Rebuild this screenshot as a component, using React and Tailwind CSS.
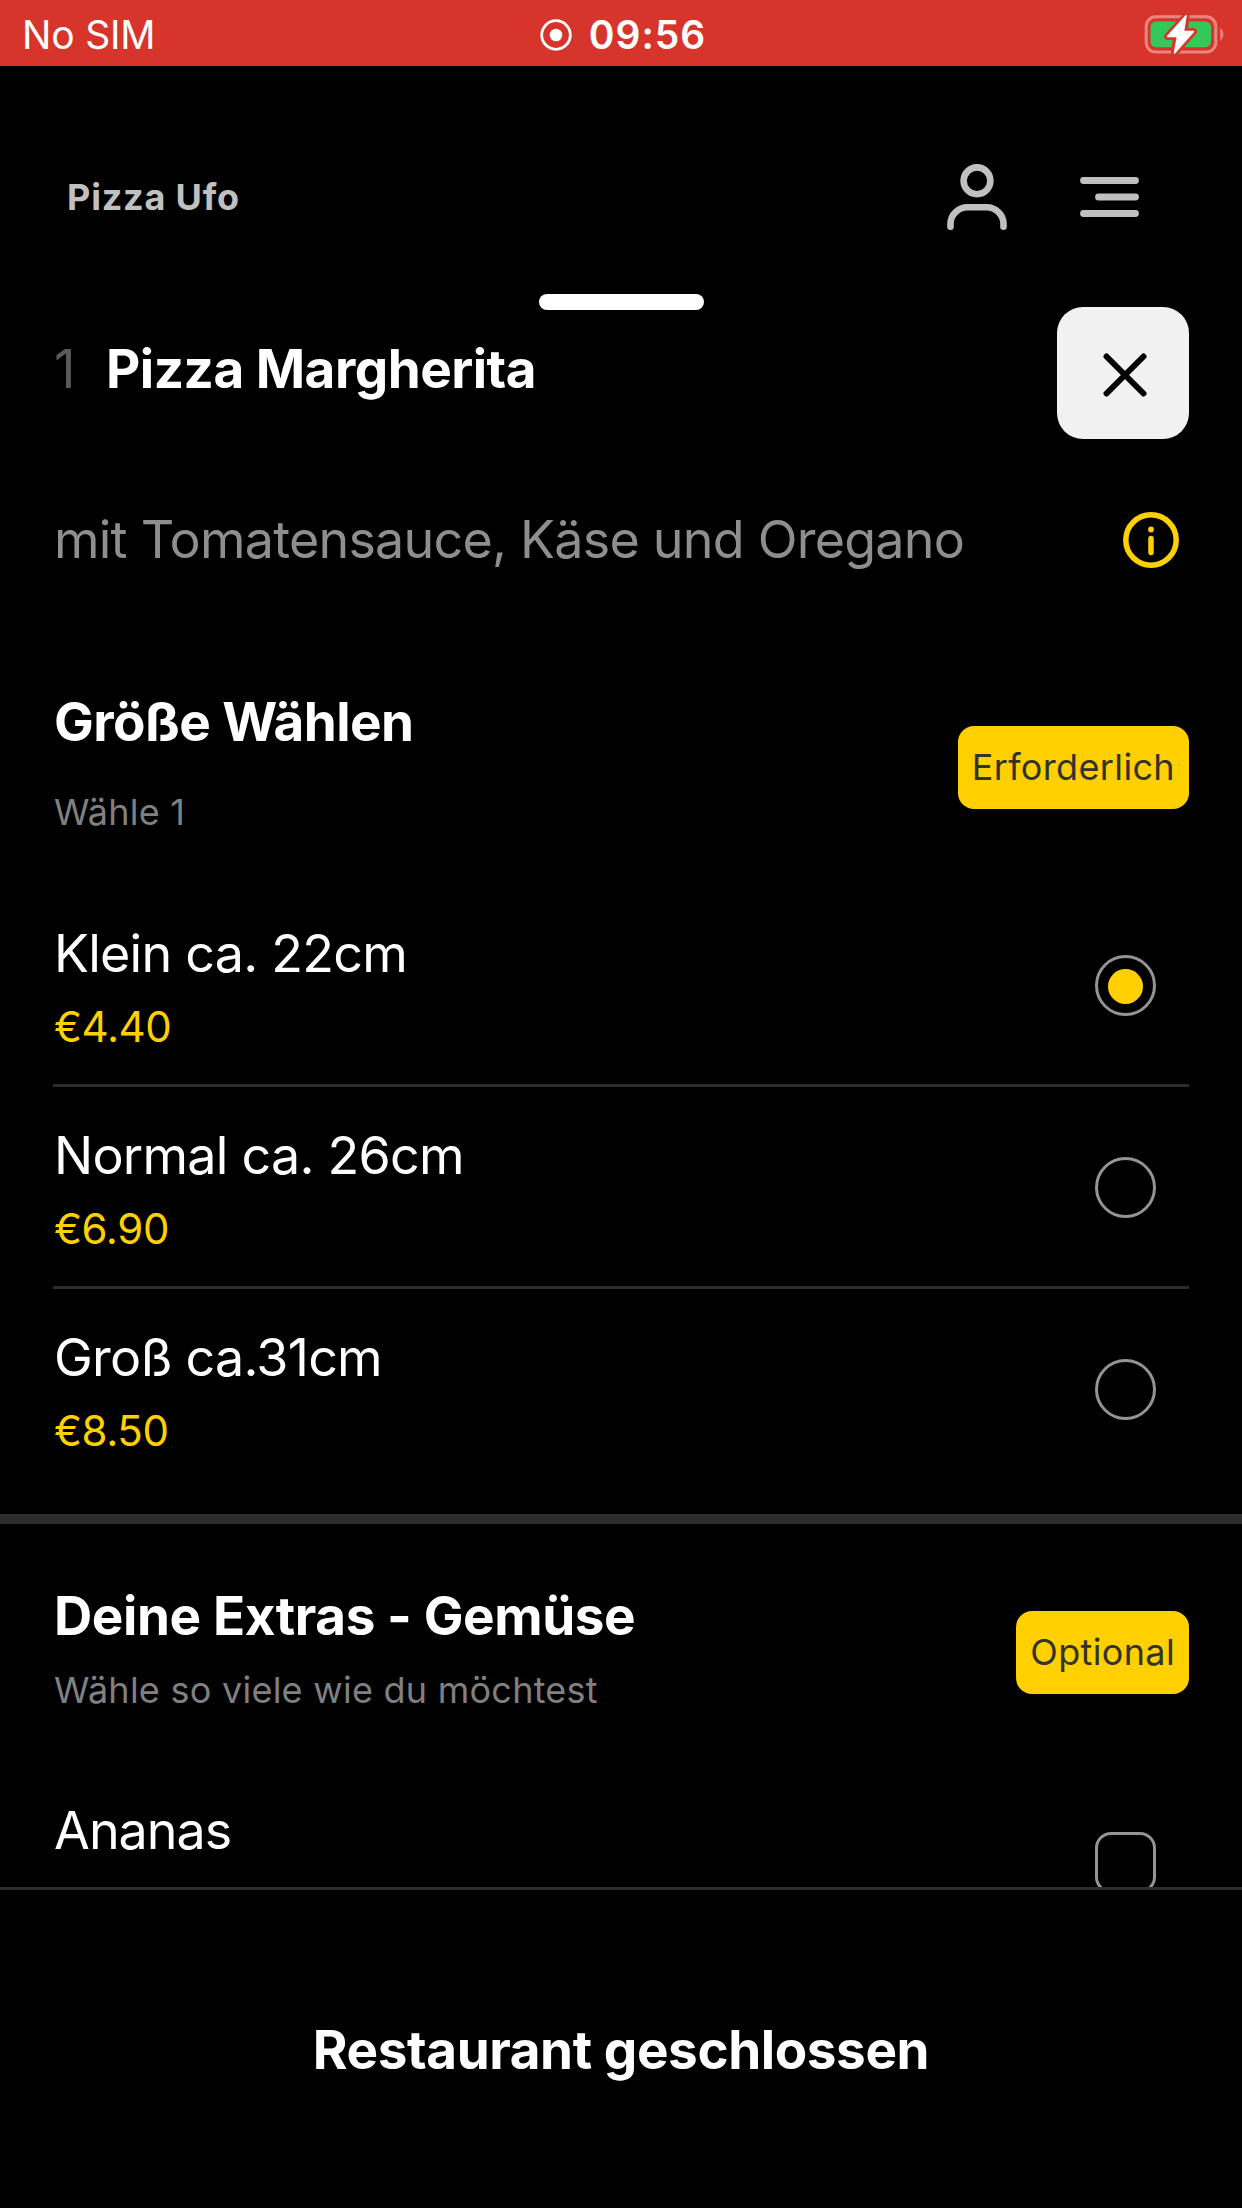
import { useState } from "react";

const sizes = [
  { id: "klein", name: "Klein ca. 22cm", price: "€4.40" },
  { id: "normal", name: "Normal ca. 26cm", price: "€6.90" },
  { id: "gross", name: "Groß ca.31cm", price: "€8.50" },
];

function StatusBar() {
  return (
    <div className="grid h-[66px] shrink-0 grid-cols-3 items-center bg-[#d7352c] text-[39px] leading-[68px] text-white">
      <span className="pl-[22px] tracking-[-0.2px]">No SIM</span>
      <div className="flex items-center justify-center gap-[17px] pl-[4px] pt-px">
        <svg width="32" height="32" viewBox="0 0 32 32" fill="none">
          <circle cx="16" cy="16" r="14.3" stroke="#fff" strokeWidth="2.8" />
          <circle cx="16" cy="16" r="6.3" fill="#fff" />
        </svg>
        <span className="font-semibold tracking-[1px]">09:56</span>
      </div>
      <svg className="ml-auto mr-[18px]" width="80" height="44" viewBox="0 0 80 44">
        <rect x="2.2" y="3.8" width="69.6" height="35.2" rx="9.5" fill="none" stroke="#e88680" strokeWidth="3" />
        <path d="M76.3 15.2c1.9 1.1 3 3.3 3 6.1s-1.100 5-3 6.100z" fill="#e88680" />
        <rect x="6.500" y="8.600" width="60.500" height="25.600" rx="5.500" fill="#34c759" />
        <path d="M42 3 23.500 23.500h9L30.500 40 49.500 18.500H40z" fill="#d7352c" stroke="#d7352c" strokeWidth="7" strokeLinejoin="round" />
        <path d="M42 2.800 23.500 23.500h10L30.500 40 49.500 18.500H39.500z" fill="#fff" stroke="#fff" strokeWidth="1.500" strokeLinejoin="round" />
      </svg>
    </div>
  );
}

function Header() {
  return (
    <header className="flex h-[228px] shrink-0 items-center pt-[34px] pl-[67px] pr-[103px]">
      <span className="text-[36px] font-bold leading-[50px] tracking-[0.8px] text-[#c0c0c0]">Pizza Ufo</span>
      <svg className="ml-auto" width="60" height="68" viewBox="0 0 60 68" fill="none" stroke="#c0c0c0" strokeWidth="6.6" strokeLinecap="round">
        <circle cx="30" cy="17.800" r="13.400" />
        <path d="M3.500 63.800v-3.300A17 16.500 0 0 1 20.500 44.300h19a17 16.500 0 0 1 17 16.200v3.300" />
      </svg>
      <svg className="ml-[73px]" width="59" height="42" viewBox="0 0 59 42" stroke="#c0c0c0" strokeWidth="6.8" strokeLinecap="round">
        <path d="M3.500 4.500h52M18.500 21h37M3.500 37.500h52" />
      </svg>
    </header>
  );
}

function Badge({ children }) {
  return (
    <span className="flex h-[83px] items-center rounded-[16px] bg-[#ffd000] px-[14px] text-[36px] tracking-[0.35px] text-[#33332b]">
      {children}
    </span>
  );
}

function Radio({ checked, onChange }) {
  return (
    <button
      role="radio"
      aria-checked={checked}
      onClick={onChange}
      className="mt-[2px] mr-[33px] flex size-[61px] shrink-0 items-center justify-center rounded-full border-[3px] border-[#949494]"
    >
      {checked && <span className="mt-[2px] size-[35px] rounded-full bg-[#ffd000]" />}
    </button>
  );
}

export default function App() {
  const [selected, setSelected] = useState("klein");
  const [pineapple, setPineapple] = useState(false);

  return (
    <div className="flex h-[2208px] w-[1242px] flex-col overflow-hidden bg-black font-['Inter',sans-serif] text-white">
      <StatusBar />
      <Header />

      <main className="flex h-[1593px] shrink-0 flex-col overflow-hidden">
        <div className="mx-auto h-[16px] w-[165px] shrink-0 rounded-[8px] bg-white" />

        <div className="-mt-[3px] flex h-[132px] shrink-0 items-center pl-[54px] pr-[53px]">
          <h1 className="flex pb-[8px] text-[53px] leading-[60px]">
            <span className="w-[52px] text-[#5a5a5a]">1</span>
            <span className="font-bold tracking-[-0.5px]">Pizza Margherita</span>
          </h1>
          <button className="ml-auto flex size-[132px] items-center justify-center rounded-[26px] bg-[#f1f1f1]">
            <svg className="mt-[3px] ml-[3px]" width="44" height="44" viewBox="0 0 44 44" stroke="#000" strokeWidth="6" strokeLinecap="round">
              <path d="M3.500 3.500l37 37M40.500 3.500l-37 37" />
            </svg>
          </button>
        </div>

        <div className="flex h-[202px] shrink-0 items-center pl-[54px] pr-[63px]">
          <p className="text-[52px] leading-[60px] tracking-[-0.76px] text-[#8e8e8e]">mit Tomatensauce, Käse und Oregano</p>
          <svg className="ml-auto" width="56" height="56" viewBox="0 0 56 56" fill="none" stroke="#ffd000" strokeWidth="5.5" strokeLinecap="round">
            <circle cx="28" cy="28" r="25.200" />
            <path d="M28 26.500v14" />
            <circle cx="28" cy="17.500" r="2.900" fill="#ffd000" stroke="none" />
          </svg>
        </div>

        <section className="px-[53px]">
          <div className="flex items-center justify-between pt-[51px]">
            <div className="pl-px">
              <h2 className="text-[53px] font-bold leading-[60px] tracking-[-0.55px]">Größe Wählen</h2>
              <p className="mt-[30px] text-[36px] leading-[60px] tracking-[0.2px] text-[#808080]">Wähle 1</p>
            </div>
            <Badge>Erforderlich</Badge>
          </div>

          <div className="mt-[43px]" role="radiogroup">
            {sizes.map((size) => (
              <div
                key={size.id}
                className="flex h-[202px] items-center justify-between border-b-[3px] border-[#2d2d2d] last:border-transparent"
              >
                <div className="pt-[7px] pl-px">
                  <p className="text-[52px] leading-[60px] tracking-[-0.75px]">{size.name}</p>
                  <p className="mt-[18px] text-[42px] leading-[50px] tracking-[-0.4px] text-[#ffd000]">{size.price}</p>
                </div>
                <Radio checked={selected === size.id} onChange={() => setSelected(size.id)} />
              </div>
            ))}
          </div>
        </section>

        <div className="mt-[23px] h-[10px] shrink-0 bg-[#2d2d2d]" />

        <section className="px-[53px]">
          <div className="flex items-center justify-between pt-[62px]">
            <div className="pl-px">
              <h2 className="text-[53px] font-bold leading-[60px] tracking-[-0.4px]">Deine Extras - Gemüse</h2>
              <p className="mt-[19px] text-[36px] leading-[50px] tracking-[0.25px] text-[#808080]">Wähle so viele wie du möchtest</p>
            </div>
            <div className="pt-[3px]">
              <Badge>Optional</Badge>
            </div>
          </div>
          <div className="flex justify-between pt-[86px]">
            <p className="pl-px text-[52px] leading-[60px] tracking-[-1px]">Ananas</p>
            <button
              role="checkbox"
              aria-checked={pineapple}
              onClick={() => setPineapple(!pineapple)}
              className="mt-[31px] mr-[33px] size-[61px] rounded-[16px] border-[3px] border-[#949494]"
            />
          </div>
        </section>
      </main>

      <footer className="flex flex-1 items-center justify-center border-t-[3px] border-[#2d2d2d] pt-[2px]">
        <p className="text-[53px] font-bold leading-[60px] tracking-[-0.4px]">Restaurant geschlossen</p>
      </footer>
    </div>
  );
}
